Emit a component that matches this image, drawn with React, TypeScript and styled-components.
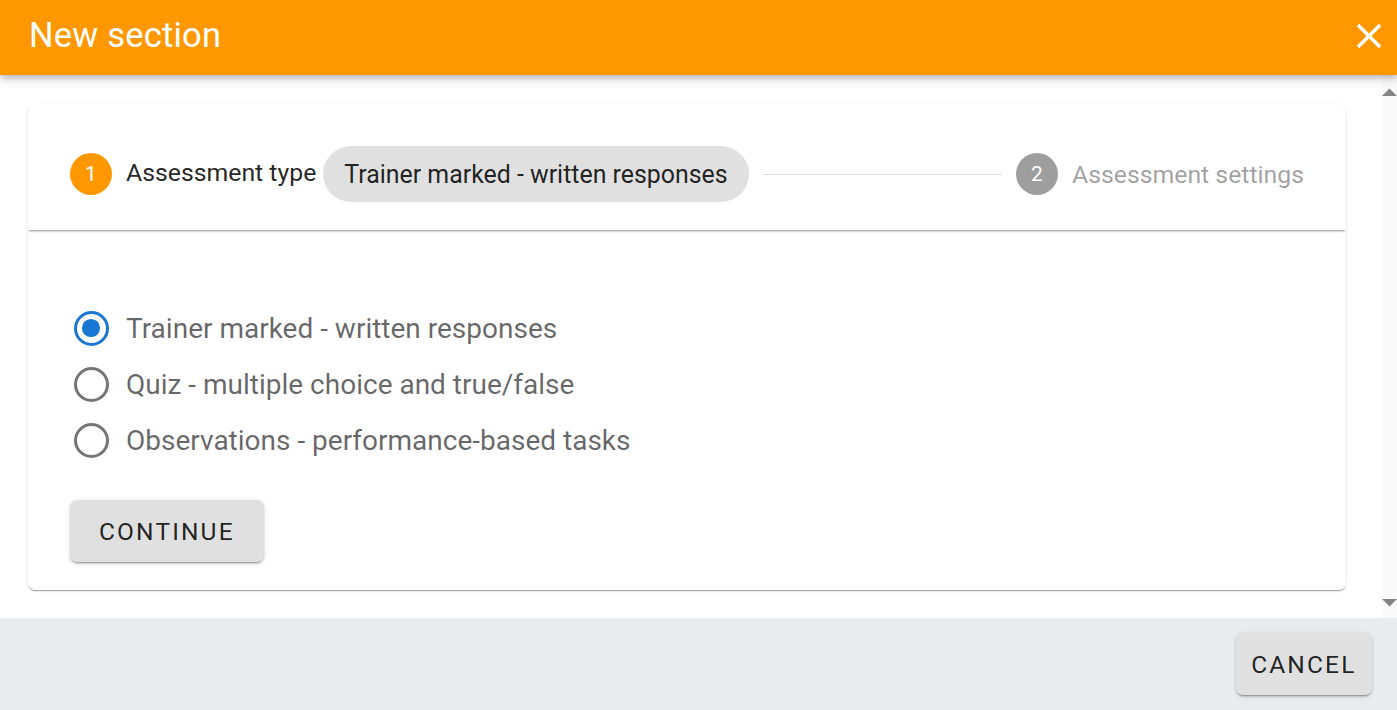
import React, { useState } from "react";
import styled, { createGlobalStyle } from "styled-components";

const GlobalStyle = createGlobalStyle`
  html, body {
    margin: 0;
    padding: 0;
    height: 100%;
    overflow: hidden;
    font-family: Roboto, "Liberation Sans", Arial, sans-serif;
  }
  #root {
    height: 100%;
  }
  * {
    box-sizing: border-box;
  }
`;

const Dialog = styled.div`
  display: flex;
  flex-direction: column;
  height: 710px;
  width: 100%;
  background: #ffffff;
`;

const TitleBar = styled.div`
  height: 75px;
  flex-shrink: 0;
  display: flex;
  align-items: center;
  justify-content: space-between;
  padding: 0 7px 4px 29px;
  background: #ff9800;
  color: #ffffff;
  position: relative;
  z-index: 2;
  box-shadow: 0 3px 6px rgba(0, 0, 0, 0.22), 0 6px 12px rgba(0, 0, 0, 0.08);
`;

const Title = styled.h2`
  margin: 0;
  font-size: 34.5px;
  font-weight: 400;
  letter-spacing: 0.2px;
  line-height: 1;
`;

const CloseButton = styled.button`
  width: 42px;
  height: 42px;
  padding: 0;
  border: none;
  background: transparent;
  color: #ffffff;
  display: flex;
  align-items: center;
  justify-content: center;
  cursor: pointer;
`;

const ScrollArea = styled.div`
  flex: 1;
  display: flex;
  min-height: 0;
`;

const Content = styled.div`
  flex: 1;
  overflow: hidden;
  padding: 29px 36px 28px 28px;
  background: #ffffff;
`;

// drawn scrollbar track, since the headless browser hides real ones
const ScrollTrack = styled.div`
  width: 15px;
  flex-shrink: 0;
  display: flex;
  flex-direction: column;
  justify-content: space-between;
  background: #fafafa;
`;

const ScrollArrow = styled.div`
  height: 15px;
  display: flex;
  align-items: center;
  justify-content: center;
  color: #858585;
`;

const Card = styled.div`
  background: #ffffff;
  border-radius: 7px;
  box-shadow: 0 2px 1px -1px rgba(0, 0, 0, 0.2), 0 1px 1px 0 rgba(0, 0, 0, 0.14),
    0 1px 3px 0 rgba(0, 0, 0, 0.12);
  overflow: hidden;
`;

const StepperHeader = styled.div`
  display: flex;
  align-items: center;
  padding: 42px 42px 28px;
  position: relative;
  box-shadow: 0 2px 2px -1px rgba(0, 0, 0, 0.35), 0 2px 3px -1px rgba(0, 0, 0, 0.1);
`;

const Step = styled.div`
  display: flex;
  align-items: center;
`;

const StepIcon = styled.div<{ $active?: boolean }>`
  width: 42px;
  height: 42px;
  border-radius: 50%;
  background: ${(p) => (p.$active ? "#ff9800" : "#9e9e9e")};
  color: #ffffff;
  font-size: 21px;
  display: flex;
  align-items: center;
  justify-content: center;
  flex-shrink: 0;
`;

const StepLabel = styled.span<{ $active?: boolean }>`
  margin-left: 14px;
  margin-bottom: ${(p) => (p.$active ? "4px" : "0")};
  font-size: 24.8px;
  color: ${(p) => (p.$active ? "rgba(0,0,0,0.87)" : "rgba(0,0,0,0.38)")};
  white-space: nowrap;
`;

const Chip = styled.span`
  margin-left: 7px;
  height: 56px;
  padding: 0 21px;
  border-radius: 28px;
  background: #e0e0e0;
  color: rgba(0, 0, 0, 0.87);
  font-size: 24.9px;
  display: flex;
  align-items: center;
  white-space: nowrap;
`;

const Connector = styled.div`
  flex: 1;
  margin: 0 14px;
  border-top: 1px solid #dedede;
`;

const Body = styled.div`
  padding: 70px 42px 28px;
`;

const RadioGroup = styled.div`
  display: flex;
  flex-direction: column;
`;

const RadioRow = styled.label`
  display: flex;
  align-items: center;
  height: 56px;
  cursor: pointer;
`;

const RadioBox = styled.span`
  width: 42px;
  height: 42px;
  display: flex;
  align-items: center;
  justify-content: center;
  flex-shrink: 0;
`;

const RadioCircle = styled.span<{ $checked: boolean }>`
  width: 35px;
  height: 35px;
  border-radius: 50%;
  border: 3.5px solid ${(p) => (p.$checked ? "#1976d2" : "#757575")};
  display: flex;
  align-items: center;
  justify-content: center;

  &::after {
    content: "";
    width: 17.5px;
    height: 17.5px;
    border-radius: 50%;
    background: #1976d2;
    display: ${(p) => (p.$checked ? "block" : "none")};
  }
`;

const RadioLabel = styled.span`
  margin-left: 14px;
  font-size: 28px;
  color: rgba(0, 0, 0, 0.6);
  white-space: nowrap;
`;

const GreyButton = styled.button<{ $pad: number }>`
  height: 62px;
  padding: 0 ${(p) => p.$pad}px;
  border: none;
  border-radius: 7px;
  background: #e0e0e0;
  color: rgba(0, 0, 0, 0.87);
  font-family: inherit;
  font-size: 24.5px;
  font-weight: 400;
  letter-spacing: 2.15px;
  text-transform: uppercase;
  cursor: pointer;
  box-shadow: 0 3px 1px -2px rgba(0, 0, 0, 0.2), 0 2px 2px 0 rgba(0, 0, 0, 0.14),
    0 1px 5px 0 rgba(0, 0, 0, 0.12);
`;

const ContinueButton = styled(GreyButton)`
  margin-top: 32px;
`;

const Footer = styled.div`
  height: 92px;
  flex-shrink: 0;
  display: flex;
  align-items: center;
  justify-content: flex-end;
  padding: 0 25px;
  background: #e9ecef;
`;

const options = [
  "Trainer marked - written responses",
  "Quiz - multiple choice and true/false",
  "Observations - performance-based tasks",
];

const App: React.FC = () => {
  const [selected, setSelected] = useState(0);

  return (
    <>
      <GlobalStyle />
      <Dialog>
        <TitleBar>
          <Title>New section</Title>
          <CloseButton aria-label="close">
            <svg width="42" height="42" viewBox="0 0 24 24" fill="currentColor">
              <path d="M19 6.41 17.59 5 12 10.59 6.41 5 5 6.41 10.59 12 5 17.59 6.41 19 12 13.41 17.59 19 19 17.59 13.41 12z" />
            </svg>
          </CloseButton>
        </TitleBar>
        <ScrollArea>
          <Content>
            <Card>
              <StepperHeader>
                <Step>
                  <StepIcon $active>1</StepIcon>
                  <StepLabel $active>Assessment type</StepLabel>
                  <Chip>{options[selected]}</Chip>
                </Step>
                <Connector />
                <Step>
                  <StepIcon>2</StepIcon>
                  <StepLabel>Assessment settings</StepLabel>
                </Step>
              </StepperHeader>
              <Body>
                <RadioGroup>
                  {options.map((opt, idx) => (
                    <RadioRow key={opt} onClick={() => setSelected(idx)}>
                      <RadioBox>
                        <RadioCircle $checked={selected === idx} />
                      </RadioBox>
                      <RadioLabel>{opt}</RadioLabel>
                    </RadioRow>
                  ))}
                </RadioGroup>
                <ContinueButton $pad={29}>Continue</ContinueButton>
              </Body>
            </Card>
          </Content>
          <ScrollTrack>
            <ScrollArrow style={{ marginTop: 9 }}>
              <svg width="15" height="8" viewBox="0 0 15 8">
                <polygon points="0,8 7.5,0.5 15,8" fill="currentColor" />
              </svg>
            </ScrollArrow>
            <ScrollArrow style={{ marginBottom: 8 }}>
              <svg width="15" height="8" viewBox="0 0 15 8">
                <polygon points="0,0 7.5,7.5 15,0" fill="currentColor" />
              </svg>
            </ScrollArrow>
          </ScrollTrack>
        </ScrollArea>
        <Footer>
          <GreyButton $pad={15.5}>Cancel</GreyButton>
        </Footer>
      </Dialog>
    </>
  );
};

export default App;
